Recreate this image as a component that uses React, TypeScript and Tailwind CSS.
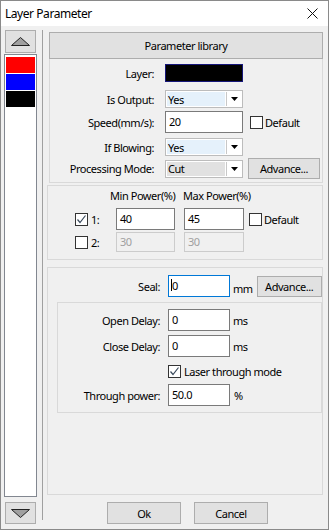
import React from "react";

const F = "font-['Noto_Sans',sans-serif] text-[11px] tracking-[-0.45px] text-black leading-none";

function Check({ checked }: { checked?: boolean }) {
  return (
    <div className="w-[13px] h-[13px] border border-[#333333] bg-white flex items-center justify-center shrink-0">
      {checked && (
        <svg width="11" height="11" viewBox="0 0 11 11">
          <polyline points="1.5,5.5 4,8.5 9.5,1.5" fill="none" stroke="#3a4a5c" strokeWidth="1.2" />
        </svg>
      )}
    </div>
  );
}

function Select({ value, hl }: { value: string; hl?: boolean }) {
  return (
    <div className="w-[78px] h-[18px] border border-[#bcbcbc] bg-white flex p-px">
      <div className={`flex-1 flex items-center pl-[1px] ${hl ? "bg-[#e5f1fb]" : "bg-[#e1e1e1]"}`}>{value}</div>
      <div className="w-px bg-[#c8c8c8] ml-[1px]" />
      <div className="w-[14px] flex items-center justify-center">
        <svg width="7" height="4" viewBox="0 0 7 4">
          <polygon points="0,0 7,0 3.5,4" fill="#000" />
        </svg>
      </div>
    </div>
  );
}

function Input({ value, w = 62, disabled, focus }: { value: string; w?: number; disabled?: boolean; focus?: boolean }) {
  return (
    <div
      style={{ width: w }}
      className={`h-[22px] border pl-[3px] pt-[4px] ${
        disabled ? "border-[#cccccc] bg-[#f0f0f0] text-[#a0a0a0]" : focus ? "border-[#0078d7] bg-white" : "border-[#7a7a7a] bg-white"
      }`}
    >
      {value}
    </div>
  );
}

function Btn({ children, w, h = 21 }: { children: React.ReactNode; w: number; h?: number }) {
  return (
    <div style={{ width: w, height: h }} className="border border-[#adadad] bg-[#e1e1e1] flex items-center justify-center shrink-0">
      {children}
    </div>
  );
}

export default function App() {
  return (
    <div className={`${F} w-[329px] h-[530px] border border-[#8a8a8a] flex flex-col bg-[#f0f0f0]`}>
      {/* title bar */}
      <div className="h-[25px] bg-white flex items-center shrink-0">
        <span className="ml-[4px] text-[12px]">Layer Parameter</span>
        <div className="ml-auto mr-[10px]">
          <svg width="11" height="11" viewBox="0 0 11 11">
            <path d="M0.5 0.5 L10.5 10.5 M10.5 0.5 L0.5 10.5" stroke="#111" strokeWidth="1" />
          </svg>
        </div>
      </div>
      {/* body */}
      <div className="flex-1 flex">
        {/* left column */}
        <div className="w-[33px] ml-[3px] pt-[4px] flex flex-col shrink-0">
          <div className="h-[23px] mx-px border border-[#adadad] bg-[#e1e1e1] flex items-center justify-center">
            <svg width="19" height="9" viewBox="0 0 19 9">
              <polygon points="0.5,8.5 18.5,8.5 9.5,0.5" fill="#a0a0a0" stroke="#222" strokeWidth="1" />
            </svg>
          </div>
          <div className="mt-px h-[443px] border border-[#828790] bg-white pt-[2px] px-[1px] flex flex-col gap-px">
            <div className="h-[16px] bg-[#ff0000]" />
            <div className="h-[16px] bg-[#0000ff]" />
            <div className="h-[16px] bg-black" />
          </div>
          <div className="mt-[5px] h-[22px] mx-px border border-[#adadad] bg-[#e1e1e1] flex items-center justify-center">
            <svg width="19" height="9" viewBox="0 0 19 9">
              <polygon points="0.5,0.5 18.5,0.5 9.5,8.5" fill="#a0a0a0" stroke="#222" strokeWidth="1" />
            </svg>
          </div>
        </div>
        {/* separator */}
        <div className="ml-[5px] mt-[4px] w-px h-[490px] bg-[#a0a0a0]" />
        {/* right column */}
        <div className="ml-[4px] w-[276px] flex flex-col">
          {/* group 1 */}
          <div className="ml-[2px] w-[274px] mt-[6px] flex flex-col">
            <div className="h-[27px] border border-[#adadad] bg-[#e1e1e1] flex items-center justify-center">Parameter library</div>
            <div className="border-x border-b border-[#d9d9d9] pb-[3px] flex flex-col">
              <div className="mt-[5px] h-[18px] flex items-center">
                <div className="w-[104px] text-right">Layer:</div>
                <div className="ml-[11px] w-[78px] h-[18px] bg-black border border-[#16167a]" />
              </div>
              <div className="mt-[8px] h-[18px] flex items-center">
                <div className="w-[104px] text-right">Is Output:</div>
                <div className="ml-[11px]"><Select value="Yes" hl /></div>
              </div>
              <div className="mt-[3px] h-[22px] flex items-center">
                <div className="w-[104px] text-right">Speed(mm/s):</div>
                <div className="ml-[11px]"><Input value="20" w={78} /></div>
                <div className="ml-[7px]"><Check /></div>
                <span className="ml-[2px]">Default</span>
              </div>
              <div className="mt-[5px] h-[18px] flex items-center">
                <div className="w-[104px] text-right">If Blowing:</div>
                <div className="ml-[11px]"><Select value="Yes" hl /></div>
              </div>
              <div className="mt-[2px] h-[21px] flex items-center">
                <div className="w-[104px] text-right">Processing Mode:</div>
                <div className="ml-[11px]"><Select value="Cut" /></div>
                <div className="ml-[5px]"><Btn w={72}>Advance...</Btn></div>
              </div>
            </div>
          </div>
          {/* group 2 */}
          <div className="mt-[2px] h-[75px] border border-[#d9d9d9] flex flex-col">
            <div className="mt-px h-[16px] flex items-center">
              <span className="ml-[62px] w-[73px]">Min Power(%)</span>
              <span>Max Power(%)</span>
            </div>
            <div className="mt-[5px] h-[22px] flex items-center">
              <div className="ml-[27px]"><Check checked /></div>
              <span className="ml-[3px] w-[25px]">1:</span>
              <Input value="40" w={59} />
              <div className="ml-[9px]"><Input value="45" w={60} /></div>
              <div className="ml-[5px]"><Check /></div>
              <span className="ml-[2px]">Default</span>
            </div>
            <div className="mt-[2px] h-[20px] flex items-center">
              <div className="ml-[27px]"><Check /></div>
              <span className="ml-[3px] w-[25px]">2:</span>
              <div className="h-[20px] w-[59px] border border-[#cccccc] bg-[#f0f0f0] text-[#a0a0a0] pl-[3px] pt-[3px]">30</div>
              <div className="ml-[9px] h-[20px] w-[60px] border border-[#cccccc] bg-[#f0f0f0] text-[#a0a0a0] pl-[3px] pt-[3px]">30</div>
            </div>
          </div>
          {/* group 3 */}
          <div className="mt-[7px] h-[228px] border border-[#d9d9d9] flex flex-col">
            <div className="mt-[7px] h-[22px] flex items-center">
              <div className="w-[112px] text-right">Seal:</div>
              <div className="ml-[8px] relative">
                <Input value="0" w={62} focus />
                <div className="absolute left-[3px] top-[4px] w-px h-[12px] bg-black" />
              </div>
              <span className="ml-[3px] mt-[4px]">mm</span>
              <div className="ml-[4px]"><Btn w={65}>Advance...</Btn></div>
            </div>
            <div className="mt-[5px] ml-[9px] border border-[#d9d9d9] pb-[6px] flex flex-col">
              <div className="mt-[6px] h-[22px] flex items-center">
                <div className="w-[102px] text-right">Open Delay:</div>
                <div className="ml-[8px]"><Input value="0" /></div>
                <span className="ml-[3px]">ms</span>
              </div>
              <div className="mt-[4px] h-[22px] flex items-center">
                <div className="w-[102px] text-right">Close Delay:</div>
                <div className="ml-[8px]"><Input value="0" /></div>
                <span className="ml-[3px]">ms</span>
              </div>
              <div className="mt-[6px] h-[16px] flex items-center">
                <div className="ml-[110px]"><Check checked /></div>
                <span className="ml-[3px]">Laser through mode</span>
              </div>
              <div className="mt-[5px] h-[22px] flex items-center">
                <div className="w-[102px] text-right">Through power:</div>
                <div className="ml-[8px]"><Input value="50.0" /></div>
                <span className="ml-[4px]">%</span>
              </div>
            </div>
          </div>
          {/* buttons */}
          <div className="mt-[7px] flex gap-[13px] ml-[60px]">
            <Btn w={74} h={22}>Ok</Btn>
            <Btn w={74} h={22}>Cancel</Btn>
          </div>
        </div>
      </div>
    </div>
  );
}
